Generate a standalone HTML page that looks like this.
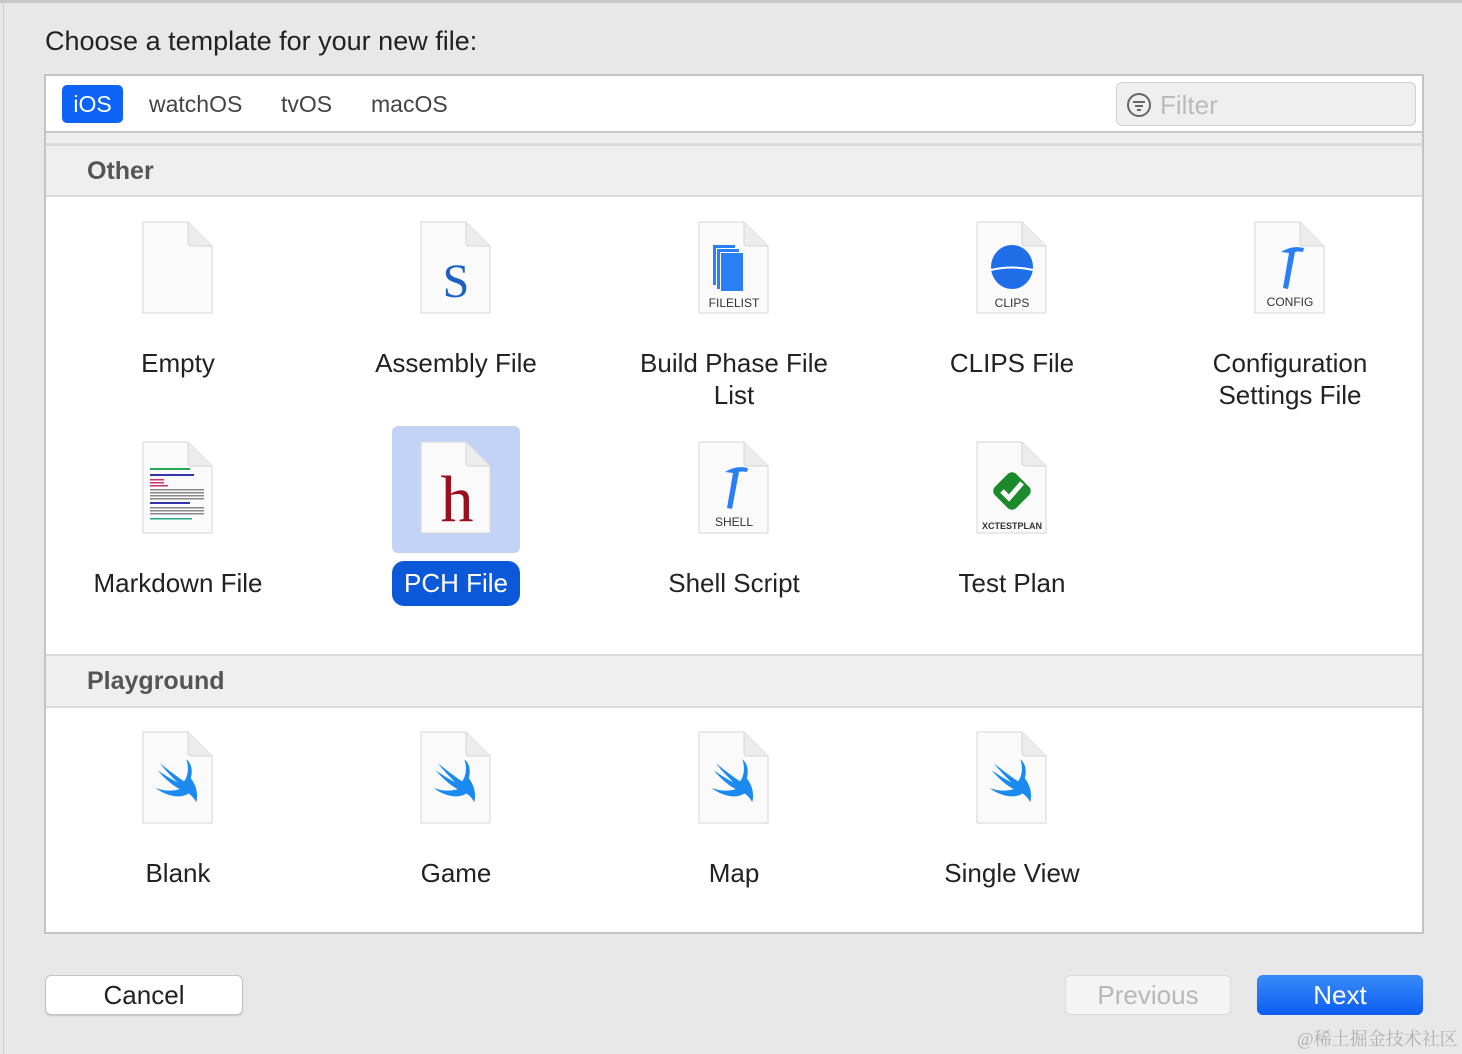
<!DOCTYPE html>
<html><head><meta charset="utf-8"><style>
*{margin:0;padding:0;box-sizing:border-box}
body{width:1462px;height:1054px;background:#e8e8e8;font-family:"Liberation Sans","Noto Sans CJK SC",sans-serif;position:relative;overflow:hidden;color:#1f1f1f}
.a{position:absolute}
.lbl{position:absolute;width:260px;text-align:center;font-size:26px;line-height:32px;color:#222}
.doc{position:absolute;width:72px;height:94px}
</style></head><body>
<div class="a" style="left:0;top:0;width:1462px;height:3px;background:#c8c8c8"></div>
<div class="a" style="left:3px;top:3px;width:1px;height:1051px;background:#cfcfcf"></div>
<div class="a" style="left:45px;top:26px;font-size:27px;color:#222">Choose a template for your new file:</div>

<div class="a" style="left:44px;top:74px;width:1380px;height:860px;border:2px solid #c4c4c4;background:#fff"></div>
<div class="a" style="left:62px;top:85px;width:61px;height:38px;background:#0d63f5;border-radius:5px;color:#fff;font-size:23px;line-height:38px;text-align:center">iOS</div>
<div class="a" style="left:149px;top:91px;font-size:23px;color:#444">watchOS</div>
<div class="a" style="left:281px;top:91px;font-size:23px;color:#444">tvOS</div>
<div class="a" style="left:371px;top:91px;font-size:23px;color:#444">macOS</div>
<div class="a" style="left:1116px;top:82px;width:300px;height:44px;border:1px solid #d0d0d0;border-radius:6px;background:#efefef"></div>
<svg class="a" style="left:1126px;top:92px" width="26" height="26" viewBox="0 0 26 26"><circle cx="13" cy="13" r="11" fill="none" stroke="#666" stroke-width="2"/><path d="M7 10h12M9 14h8M11 18h4" stroke="#666" stroke-width="2"/></svg>
<div class="a" style="left:1160px;top:90px;font-size:26px;color:#bbb">Filter</div>

<div class="a" style="left:46px;top:131px;width:1376px;height:2px;background:#c8c8c8"></div>
<div class="a" style="left:46px;top:133px;width:1376px;height:10px;background:#efefef"></div>
<div class="a" style="left:46px;top:143px;width:1376px;height:3px;background:#dcdcdc"></div>
<div class="a" style="left:46px;top:146px;width:1376px;height:51px;background:#efefef;border-bottom:2px solid #dadada"></div>
<div class="a" style="left:87px;top:157px;font-size:25px;font-weight:bold;color:#555">Other</div>

<div class="a" style="left:46px;top:654px;width:1376px;height:54px;background:#efefef;border-top:2px solid #dadada;border-bottom:2px solid #dadada"></div>
<div class="a" style="left:87px;top:667px;font-size:25px;font-weight:bold;color:#555">Playground</div>

<div class="a" style="left:392px;top:426px;width:128px;height:127px;background:#c3d3f5;border-radius:6px"></div>
<div class="a" style="left:392px;top:561px;width:128px;height:45px;background:#0b58d9;border-radius:12px"></div>

<svg width="0" height="0" style="position:absolute"><defs>
<g id="d"><path d="M1 1H46L70 25V92H1Z" fill="#fafafa" stroke="#d6d6d6"/><path d="M46 1V22Q46 25 49 25H70" fill="#ececec" stroke="#d6d6d6"/></g>
<path id="sw" d="M10,60 C30,75 55,80 70,70 C78,75 82,82 84,86 C88,70 84,55 74,42 C78,30 76,15 66,8 C72,25 68,40 62,48 C50,40 30,25 18,15 C28,28 40,40 50,50 C38,44 26,36 14,28 C26,42 40,55 54,62 C42,66 26,66 10,60 Z" fill="#1a8af0"/>
<path id="hm" d="M27 31Q38 24 50 27L49 31Q43 30 41 31L34 68L29 67L35 32Z" fill="#2a7ff5"/>
</defs></svg>

<!-- row 1 -->
<svg class="doc" style="left:142px;top:221px"><use href="#d"/></svg>
<svg class="doc" style="left:420px;top:221px"><use href="#d"/><text x="36" y="76" font-family="Liberation Serif" font-size="48" fill="#1e5fc4" text-anchor="middle">S</text></svg>
<svg class="doc" style="left:698px;top:221px"><use href="#d"/><rect x="15" y="24" width="22" height="40" fill="#2a7ff5"/><rect x="18" y="27" width="22" height="40" fill="#fff"/><rect x="19" y="28" width="22" height="40" fill="#2a7ff5"/><rect x="22" y="31" width="22" height="40" fill="#fff"/><rect x="23" y="32" width="22" height="38" fill="#2a7ff5"/><text x="36" y="86" font-size="12" fill="#333" text-anchor="middle" font-family="Liberation Sans">FILELIST</text></svg>
<svg class="doc" style="left:976px;top:221px"><use href="#d"/><ellipse cx="36" cy="46" rx="21" ry="22" fill="#1f6ee8"/><path d="M15 49Q36 44 57 49" stroke="#fff" stroke-width="2" fill="none"/><text x="36" y="86" font-size="12" fill="#333" text-anchor="middle" font-family="Liberation Sans">CLIPS</text></svg>
<svg class="doc" style="left:1254px;top:221px"><use href="#d"/><use href="#hm"/><text x="36" y="85" font-size="12" fill="#333" text-anchor="middle" font-family="Liberation Sans">CONFIG</text></svg>
<div class="lbl" style="left:48px;top:347px">Empty</div>
<div class="lbl" style="left:326px;top:347px">Assembly File</div>
<div class="lbl" style="left:604px;top:347px">Build Phase File<br>List</div>
<div class="lbl" style="left:882px;top:347px">CLIPS File</div>
<div class="lbl" style="left:1160px;top:347px">Configuration<br>Settings File</div>

<!-- row 2 -->
<svg class="doc" style="left:142px;top:441px"><use href="#d"/><g fill="#888"><rect x="8" y="27" width="40" height="2" fill="#2a5"/><rect x="8" y="33" width="44" height="2" fill="#33a"/><rect x="8" y="38" width="14" height="1.5" fill="#c36"/><rect x="8" y="41" width="14" height="1.5" fill="#c36"/><rect x="8" y="44" width="18" height="1.5" fill="#c36"/><rect x="8" y="48" width="54" height="1.5"/><rect x="8" y="51" width="54" height="1.5"/><rect x="8" y="54" width="54" height="1.5"/><rect x="8" y="57" width="54" height="1.5"/><rect x="8" y="61" width="40" height="2" fill="#33a"/><rect x="8" y="66" width="54" height="1.5"/><rect x="8" y="69" width="54" height="1.5"/><rect x="8" y="72" width="54" height="1.5"/><rect x="8" y="77" width="42" height="1.5" fill="#2a8"/></g></svg>
<svg class="doc" style="left:420px;top:441px"><use href="#d"/><text x="37" y="80" font-family="Liberation Serif" font-size="66" fill="#9a0e1e" text-anchor="middle">h</text></svg>
<svg class="doc" style="left:698px;top:441px"><use href="#d"/><use href="#hm"/><text x="36" y="85" font-size="12" fill="#333" text-anchor="middle" font-family="Liberation Sans">SHELL</text></svg>
<svg class="doc" style="left:976px;top:441px"><use href="#d"/><rect x="21" y="35" width="30" height="30" rx="6" fill="#1a8a2a" transform="rotate(45 36 50)"/><path d="M26 50L33 57L46 42" stroke="#fff" stroke-width="5" fill="none"/><text x="36" y="88" font-size="9" font-weight="bold" fill="#333" text-anchor="middle" font-family="Liberation Sans">XCTESTPLAN</text></svg>
<div class="lbl" style="left:48px;top:567px">Markdown File</div>
<div class="lbl" style="left:326px;top:567px;color:#fff">PCH File</div>
<div class="lbl" style="left:604px;top:567px">Shell Script</div>
<div class="lbl" style="left:882px;top:567px">Test Plan</div>

<!-- playground -->
<svg class="doc" style="left:142px;top:731px"><use href="#d"/><g transform="translate(8,24) scale(0.55)"><use href="#sw"/></g></svg>
<svg class="doc" style="left:420px;top:731px"><use href="#d"/><g transform="translate(8,24) scale(0.55)"><use href="#sw"/></g></svg>
<svg class="doc" style="left:698px;top:731px"><use href="#d"/><g transform="translate(8,24) scale(0.55)"><use href="#sw"/></g></svg>
<svg class="doc" style="left:976px;top:731px"><use href="#d"/><g transform="translate(8,24) scale(0.55)"><use href="#sw"/></g></svg>
<div class="lbl" style="left:48px;top:857px">Blank</div>
<div class="lbl" style="left:326px;top:857px">Game</div>
<div class="lbl" style="left:604px;top:857px">Map</div>
<div class="lbl" style="left:882px;top:857px">Single View</div>

<!-- buttons -->
<div class="a" style="left:45px;top:975px;width:198px;height:40px;background:#fff;border:1px solid #c4c4c4;border-radius:6px;box-shadow:0 1px 1px rgba(0,0,0,.15);text-align:center;font-size:26px;line-height:38px;color:#222">Cancel</div>
<div class="a" style="left:1065px;top:975px;width:166px;height:40px;background:#f4f4f4;border:1px solid #dadada;border-radius:6px;text-align:center;font-size:26px;line-height:38px;color:#b8b8b8">Previous</div>
<div class="a" style="left:1257px;top:975px;width:166px;height:40px;background:linear-gradient(#3a8af8,#0b5ef2);border-radius:6px;text-align:center;font-size:26px;line-height:40px;color:#fff">Next</div>
<div class="a" style="left:1297px;top:1025px;font-size:18px;color:#b0b0b0;font-family:'Liberation Serif','Noto Serif CJK SC',serif">@稀土掘金技术社区</div>
</body></html>
